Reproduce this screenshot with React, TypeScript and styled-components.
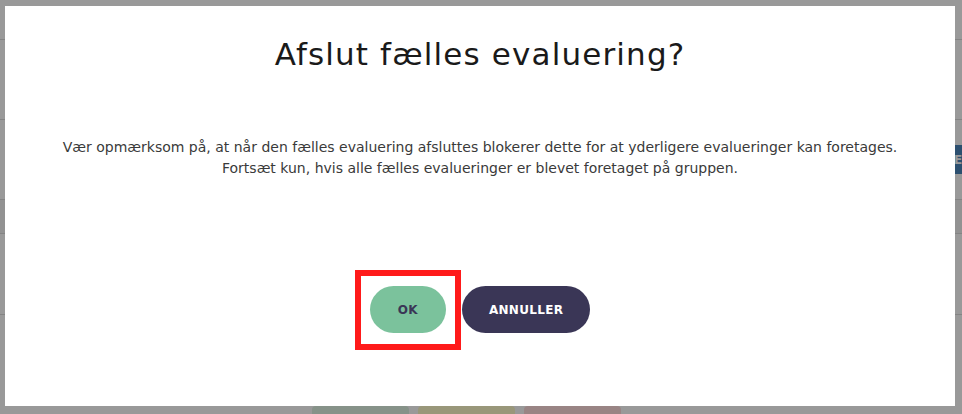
import React from 'react';
import styled, { createGlobalStyle } from 'styled-components';

const GlobalStyle = createGlobalStyle`
	html,
	body {
		margin: 0;
		padding: 0;
		background: #ffffff;
		font-family: 'DejaVu Sans', 'Open Sans', sans-serif;
	}
`;

const Page = styled.div`
	position: relative;
	width: 962px;
	height: 414px;
	overflow: hidden;
	background: #ffffff;
`;

const Table = styled.div`
	display: flex;
	flex-direction: column;
	padding-top: 39px;
`;

const Row = styled.div<{ $height: number; $shade?: boolean }>`
	height: ${(p) => p.$height}px;
	border-top: 1px solid #dcdcdc;
	background: ${(p) => (p.$shade ? '#f3f3f3' : '#ffffff')};
	display: flex;
	align-items: center;
	justify-content: flex-end;
`;

const Badge = styled.div`
	width: 30px;
	height: 29px;
	margin-right: -22px;
	background: #4a84b9;
	color: #ffffff;
	font-weight: bold;
	font-size: 12px;
	display: flex;
	align-items: center;
	padding-left: 4px;
`;

const BottomBar = styled.div`
	position: absolute;
	left: 312px;
	top: 406px;
	display: flex;
	gap: 9px;
`;

const Chip = styled.div<{ $color: string }>`
	width: 97px;
	height: 20px;
	border-radius: 4px;
	background: ${(p) => p.$color};
`;

const Overlay = styled.div`
	position: absolute;
	inset: 0;
	background: rgba(0, 0, 0, 0.4);
	display: flex;
	padding: 6px 7px 8px 5px;
`;

const Modal = styled.div`
	flex: 1;
	background: #ffffff;
	display: flex;
	flex-direction: column;
	align-items: center;
	padding-top: 30px;
`;

const Title = styled.h1`
	margin: 0;
	font-size: 31px;
	line-height: 36px;
	font-weight: 400;
	color: #1a1a1a;
	letter-spacing: 1.15px;
`;

const Message = styled.p`
	margin: 65px 0 0;
	font-size: 14px;
	line-height: 21px;
	color: #3a3a3a;
	text-align: center;
`;

const Actions = styled.div`
	display: flex;
	gap: 16px;
	margin-top: 107px;
`;

const Button = styled.button<{ $variant: 'ok' | 'cancel'; $focused?: boolean }>`
	position: relative;
	height: 47px;
	padding: 0 ${(p) => (p.$variant === 'ok' ? 28 : 27)}px;
	border: none;
	border-radius: 24px;
	font-family: 'DejaVu Sans', 'Open Sans', sans-serif;
	font-weight: bold;
	font-size: 12px;
	letter-spacing: 0.3px;
	cursor: pointer;
	background: ${(p) => (p.$variant === 'ok' ? '#7bc29c' : '#3a3656')};
	color: ${(p) => (p.$variant === 'ok' ? '#3a3656' : '#ffffff')};

	&::after {
		content: '';
		display: ${(p) => (p.$focused ? 'block' : 'none')};
		position: absolute;
		top: -16px;
		bottom: -17px;
		left: -15px;
		right: -15px;
		border: 6px solid #ff1a1a;
	}
`;

const App: React.FunctionComponent = () => {
	return (
		<Page>
			<GlobalStyle />
			<Table>
				<Row $height={79} />
				<Row $height={79}>
					<Badge>E</Badge>
				</Row>
				<Row $height={33} $shade />
				<Row $height={80} />
				<Row $height={80} />
			</Table>
			<BottomBar>
				<Chip $color="#e0f3e4" />
				<Chip $color="#fffccc" />
				<Chip $color="#ffdcdc" />
			</BottomBar>
			<Overlay>
				<Modal>
					<Title>Afslut fælles evaluering?</Title>
					<Message>
						Vær opmærksom på, at når den fælles evaluering afsluttes blokerer dette for at yderligere evalueringer kan foretages.
						<br />
						Fortsæt kun, hvis alle fælles evalueringer er blevet foretaget på gruppen.
					</Message>
					<Actions>
						<Button $variant="ok" $focused>
							OK
						</Button>
						<Button $variant="cancel">ANNULLER</Button>
					</Actions>
				</Modal>
			</Overlay>
		</Page>
	);
};

export default App;
